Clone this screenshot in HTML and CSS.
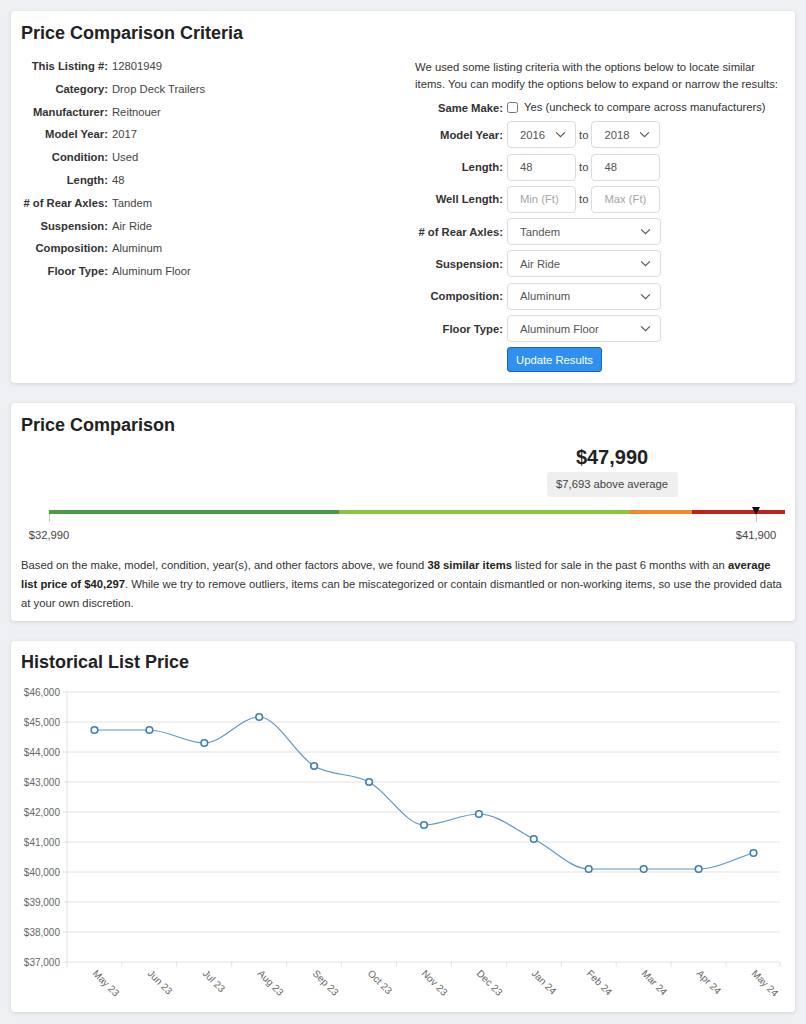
FILE: index.html
```html
<!DOCTYPE html>
<html lang="en">
<head>
<meta charset="utf-8">
<title>Price Comparison</title>
<link rel="stylesheet" href="styles.css">
</head>
<body>
<section class="card criteria">
  <h2 class="card-title">Price Comparison Criteria</h2>
  <div class="criteria-body">
    <dl class="facts">
      <dt>This Listing #:</dt><dd>12801949</dd>
      <dt>Category:</dt><dd>Drop Deck Trailers</dd>
      <dt>Manufacturer:</dt><dd>Reitnouer</dd>
      <dt>Model Year:</dt><dd>2017</dd>
      <dt>Condition:</dt><dd>Used</dd>
      <dt>Length:</dt><dd>48</dd>
      <dt># of Rear Axles:</dt><dd>Tandem</dd>
      <dt>Suspension:</dt><dd>Air Ride</dd>
      <dt>Composition:</dt><dd>Aluminum</dd>
      <dt>Floor Type:</dt><dd>Aluminum Floor</dd>
    </dl>
    <div class="options">
      <p class="intro">We used some listing criteria with the options below to locate similar items. You can modify the options below to expand or narrow the results:</p>
      <form class="opt-grid">
        <label class="opt-label">Same Make:</label>
        <div class="opt-check"><input type="checkbox" class="check"><span>Yes (uncheck to compare across manufacturers)</span></div>

        <label class="opt-label">Model Year:</label>
        <div class="opt-pair">
          <div class="select small"><span>2016</span><svg viewBox="0 0 12 8" class="chev"><path d="M1 1.5 6 6.5 11 1.5"/></svg></div>
          <span class="to">to</span>
          <div class="select small"><span>2018</span><svg viewBox="0 0 12 8" class="chev"><path d="M1 1.5 6 6.5 11 1.5"/></svg></div>
        </div>

        <label class="opt-label">Length:</label>
        <div class="opt-pair">
          <div class="input small">48</div>
          <span class="to">to</span>
          <div class="input small">48</div>
        </div>

        <label class="opt-label">Well Length:</label>
        <div class="opt-pair">
          <div class="input small ph">Min (Ft)</div>
          <span class="to">to</span>
          <div class="input small ph">Max (Ft)</div>
        </div>

        <label class="opt-label"># of Rear Axles:</label>
        <div class="select full"><span>Tandem</span><svg viewBox="0 0 12 8" class="chev"><path d="M1 1.5 6 6.5 11 1.5"/></svg></div>

        <label class="opt-label">Suspension:</label>
        <div class="select full"><span>Air Ride</span><svg viewBox="0 0 12 8" class="chev"><path d="M1 1.5 6 6.5 11 1.5"/></svg></div>

        <label class="opt-label">Composition:</label>
        <div class="select full"><span>Aluminum</span><svg viewBox="0 0 12 8" class="chev"><path d="M1 1.5 6 6.5 11 1.5"/></svg></div>

        <label class="opt-label">Floor Type:</label>
        <div class="select full"><span>Aluminum Floor</span><svg viewBox="0 0 12 8" class="chev"><path d="M1 1.5 6 6.5 11 1.5"/></svg></div>

        <span></span>
        <div><button type="button" class="btn">Update Results</button></div>
      </form>
    </div>
  </div>
</section>

<section class="card comparison">
  <h2 class="card-title">Price Comparison</h2>
  <div class="gauge">
    <div class="gauge-head">
      <div class="price-col" style="margin-left: calc(76.5% - 65.5px)">
        <div class="price">$47,990</div>
        <div class="badge">$7,693 above average</div>
      </div>
    </div>
    <div class="track">
      <div class="seg s1" style="width: 39.4%"></div>
      <div class="seg s2" style="width: 39.4%"></div>
      <div class="seg s3" style="width: 8.56%"></div>
      <div class="seg s4" style="width: 12.64%"></div>
      <div class="marker" style="left: 96.06%"></div>
    </div>
    <div class="scale">
      <div class="tick" style="left: 0%"><span>$32,990</span></div>
      <div class="tick" style="left: 96.06%"><span>$41,900</span></div>
    </div>
  </div>
  <p class="summary">Based on the make, model, condition, year(s), and other factors above, we found <b>38 similar items</b> listed for sale in the past 6 months with an <b>average list price of $40,297</b>. While we try to remove outliers, items can be miscategorized or contain dismantled or non-working items, so use the provided data at your own discretion.</p>
</section>

<section class="card history">
  <h2 class="card-title">Historical List Price</h2>
  <svg class="chart" viewBox="0 0 764 322" width="764" height="322">
    <g class="grid">
      <line x1="42" y1="12" x2="759" y2="12"/>
      <line x1="42" y1="42" x2="759" y2="42"/>
      <line x1="42" y1="72" x2="759" y2="72"/>
      <line x1="42" y1="102" x2="759" y2="102"/>
      <line x1="42" y1="132" x2="759" y2="132"/>
      <line x1="42" y1="162" x2="759" y2="162"/>
      <line x1="42" y1="192" x2="759" y2="192"/>
      <line x1="42" y1="222" x2="759" y2="222"/>
      <line x1="42" y1="252" x2="759" y2="252"/>
      <line x1="42" y1="282" x2="759" y2="282"/>
      <line x1="46" y1="12" x2="46" y2="287"/>
      <line x1="100.9" y1="282" x2="100.9" y2="287"/>
      <line x1="155.8" y1="282" x2="155.8" y2="287"/>
      <line x1="210.8" y1="282" x2="210.8" y2="287"/>
      <line x1="265.7" y1="282" x2="265.7" y2="287"/>
      <line x1="320.6" y1="282" x2="320.6" y2="287"/>
      <line x1="375.5" y1="282" x2="375.5" y2="287"/>
      <line x1="430.4" y1="282" x2="430.4" y2="287"/>
      <line x1="485.4" y1="282" x2="485.4" y2="287"/>
      <line x1="540.3" y1="282" x2="540.3" y2="287"/>
      <line x1="595.2" y1="282" x2="595.2" y2="287"/>
      <line x1="650.1" y1="282" x2="650.1" y2="287"/>
      <line x1="705" y1="282" x2="705" y2="287"/>
      <line x1="759" y1="282" x2="759" y2="287"/>
    </g>
    <g class="ylabels">
      <text x="39" y="15.5">$46,000</text>
      <text x="39" y="45.5">$45,000</text>
      <text x="39" y="75.5">$44,000</text>
      <text x="39" y="105.5">$43,000</text>
      <text x="39" y="135.5">$42,000</text>
      <text x="39" y="165.5">$41,000</text>
      <text x="39" y="195.5">$40,000</text>
      <text x="39" y="225.5">$39,000</text>
      <text x="39" y="255.5">$38,000</text>
      <text x="39" y="285.5">$37,000</text>
    </g>
    <g class="xlabels">
      <text transform="translate(71,294) rotate(45)">May 23</text>
      <text transform="translate(126,294) rotate(45)">Jun 23</text>
      <text transform="translate(181,294) rotate(45)">Jul 23</text>
      <text transform="translate(236,294) rotate(45)">Aug 23</text>
      <text transform="translate(291,294) rotate(45)">Sep 23</text>
      <text transform="translate(346,294) rotate(45)">Oct 23</text>
      <text transform="translate(400,294) rotate(45)">Nov 23</text>
      <text transform="translate(455,294) rotate(45)">Dec 23</text>
      <text transform="translate(510,294) rotate(45)">Jan 24</text>
      <text transform="translate(565,294) rotate(45)">Feb 24</text>
      <text transform="translate(620,294) rotate(45)">Mar 24</text>
      <text transform="translate(675,294) rotate(45)">Apr 24</text>
      <text transform="translate(730,294) rotate(45)">May 24</text>
    </g>
    <path class="line" d="M73.5,50 C91.8,50 110.1,50 128.4,50 C146.7,50 165,63 183.3,63 C201.6,63 219.9,37 238.2,37 C256.5,37 274.8,75.2 293.1,86 C311.4,96.8 329.8,92.2 348.1,102 C366.4,111.8 384.7,145 403,145 C421.3,145 439.6,134 457.9,134 C476.2,134 494.5,149.8 512.8,159 C531.1,168.2 549.4,189 567.7,189 C586,189 604.4,189 622.7,189 C641,189 659.3,189 677.6,189 C695.9,189 714.2,178.3 732.5,173"/>
    <g class="pts">
      <circle cx="73.5" cy="50" r="3.3"/>
      <circle cx="128.4" cy="50" r="3.3"/>
      <circle cx="183.3" cy="63" r="3.3"/>
      <circle cx="238.2" cy="37" r="3.3"/>
      <circle cx="293.1" cy="86" r="3.3"/>
      <circle cx="348.1" cy="102" r="3.3"/>
      <circle cx="403" cy="145" r="3.3"/>
      <circle cx="457.9" cy="134" r="3.3"/>
      <circle cx="512.8" cy="159" r="3.3"/>
      <circle cx="567.7" cy="189" r="3.3"/>
      <circle cx="622.7" cy="189" r="3.3"/>
      <circle cx="677.6" cy="189" r="3.3"/>
      <circle cx="732.5" cy="173" r="3.3"/>
    </g>
  </svg>
</section>
</body>
</html>
```

FILE: styles.css
```css
* { box-sizing: border-box; }

html, body {
  margin: 0;
  padding: 0;
}

body {
  background: #eef0f3;
  font-family: "Liberation Sans", Arial, sans-serif;
  font-size: 11.25px;
  color: #333;
  padding: 11px 11px 20px;
  display: flex;
  flex-direction: column;
  gap: 20px;
}

.card {
  background: #fff;
  border-radius: 4px;
  box-shadow: 0 1px 4px rgba(0, 0, 0, 0.12);
  padding: 10px;
}

.criteria {
  padding-bottom: 11px;
}

.comparison {
  padding-bottom: 8px;
}

.history {
  padding-top: 9px;
}

.card-title {
  margin: 0;
  font-size: 18px;
  line-height: 24px;
  font-weight: bold;
  color: #222;
}

/* criteria card */
.criteria-body {
  display: grid;
  grid-template-columns: 394px 1fr;
  margin-top: 10px;
}

.facts {
  margin: 0;
  display: grid;
  grid-template-columns: 87px 1fr;
  column-gap: 4px;
  line-height: 22.8px;
  align-content: start;
}

.facts dt {
  font-weight: bold;
  text-align: right;
  color: #333;
  white-space: nowrap;
}

.facts dd {
  margin: 0;
  color: #444;
}

.options {
  padding-top: 4px;
}

.intro {
  margin: 0 0 6px;
  font-size: 11.3px;
  line-height: 17px;
  color: #333;
}

.opt-grid {
  display: grid;
  grid-template-columns: 88px auto;
  column-gap: 4px;
  row-gap: 5.3px;
  align-items: center;
  justify-content: start;
}

.opt-label {
  font-weight: bold;
  text-align: right;
  white-space: nowrap;
  color: #333;
}

.opt-check {
  display: flex;
  align-items: center;
  gap: 6px;
  line-height: 17px;
  color: #333;
}

.check {
  margin: 0;
  width: 11px;
  height: 11px;
}

.opt-pair {
  display: flex;
  align-items: center;
  gap: 2px;
}

.to {
  color: #444;
  padding: 0 1px;
}

.select, .input {
  height: 27px;
  border: 1px solid #dcdcdc;
  border-radius: 4px;
  background: #fff;
  color: #555;
  display: flex;
  align-items: center;
  padding: 0 9px 0 12px;
}

.select {
  justify-content: space-between;
}

.select.small, .input.small {
  width: 69px;
}

.select.full {
  width: 154px;
}

.input.ph {
  color: #a6a6a6;
}

.chev {
  width: 11px;
  height: 7px;
  fill: none;
  stroke: #555;
  stroke-width: 1.3;
}

.btn {
  font-family: inherit;
  font-size: 11.25px;
  height: 25px;
  width: 95px;
  padding: 0;
  color: #fff;
  background: #3090f0;
  border: 1px solid #1e62b8;
  border-radius: 3px;
}

/* comparison card */
.gauge {
  padding-left: 28px;
}

.gauge-head {
  display: flex;
  margin-top: 8px;
}

.price-col {
  width: 131px;
  display: flex;
  flex-direction: column;
  align-items: center;
}

.price {
  font-size: 20px;
  font-weight: bold;
  line-height: 24px;
  color: #222;
}

.badge {
  margin-top: 3px;
  width: 131px;
  height: 25px;
  line-height: 25px;
  text-align: center;
  background: #efefef;
  border-radius: 3px;
  color: #444;
}

.track {
  position: relative;
  display: flex;
  height: 4px;
  margin-top: 13px;
}

.seg { height: 4px; }
.s1 { background: #4a9c42; }
.s2 { background: #8cc63e; }
.s3 { background: #ef8a2a; }
.s4 { background: #c31f1f; }

.marker {
  position: absolute;
  top: -3px;
  width: 0;
  height: 0;
  margin-left: -4.5px;
  border-left: 4.5px solid transparent;
  border-right: 4.5px solid transparent;
  border-top: 8px solid #111;
}

.scale {
  position: relative;
  height: 28px;
}

.tick {
  position: absolute;
  top: 0;
  width: 0;
  height: 28px;
}

.tick::before {
  content: "";
  position: absolute;
  left: 0;
  top: 0;
  width: 1px;
  height: 8px;
  background: #c8c8c8;
}

.tick span {
  position: absolute;
  top: 14px;
  left: 0;
  transform: translateX(-50%);
  white-space: nowrap;
  line-height: 14px;
  color: #444;
}

.summary {
  margin: 13.5px 0 0;
  font-size: 11.27px;
  line-height: 19px;
  color: #333;
}

.summary b {
  color: #222;
}

/* history chart */
.card-title + .chart {
  margin-top: 6px;
}

.chart {
  display: block;
}

.grid line {
  stroke: #e2e2e2;
  stroke-width: 1;
}

.ylabels text {
  font-family: "Liberation Sans", Arial, sans-serif;
  font-size: 10px;
  fill: #666;
  text-anchor: end;
}

.xlabels text {
  font-family: "Liberation Sans", Arial, sans-serif;
  font-size: 10px;
  fill: #666;
}

.line {
  fill: none;
  stroke: #5b97c4;
  stroke-width: 1.2;
}

.pts circle {
  fill: #fff;
  stroke: #3b7fb5;
  stroke-width: 1.6;
}
```
